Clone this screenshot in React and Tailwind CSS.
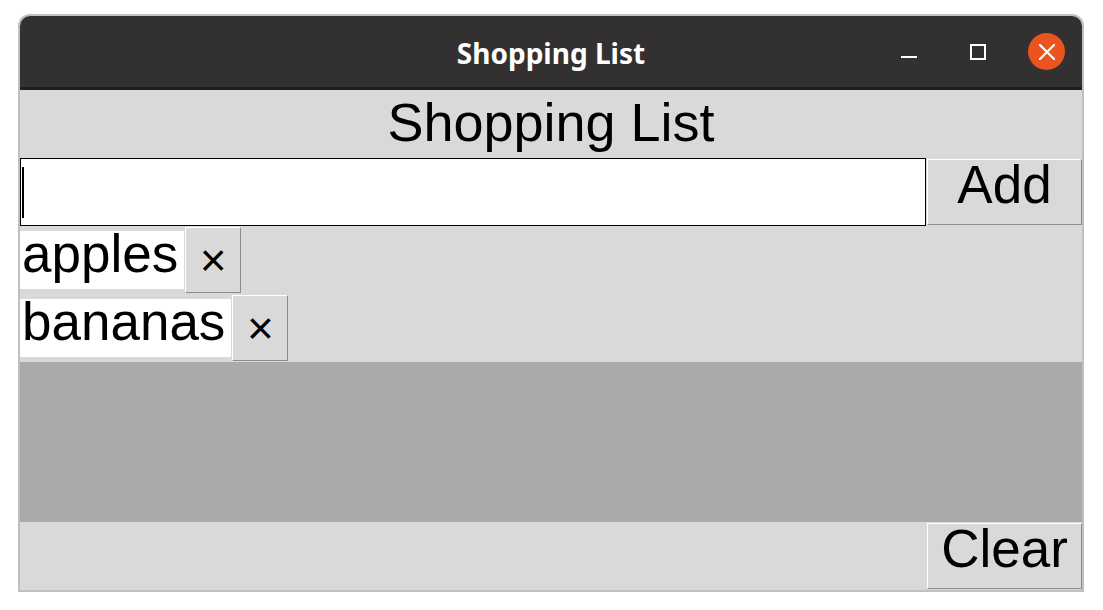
import React from 'react';

const font = { fontFamily: '"Liberation Sans", Arial, sans-serif' };

const TkButton = ({ children, className = '' }) => (
  <div
    className={`flex justify-center items-start bg-[#d9d9d9] border border-t-white border-l-white border-r-[#8c8c8c] border-b-[#8c8c8c] text-black ${className}`}
  >
    {children}
  </div>
);

const items = ['apples', 'bananas'];

export default function App() {
  return (
    <div className="w-[1103px] h-[610px] bg-white pt-[14px] pl-[18px]">
      <div className="w-[1066px] border-2 border-[#c0c0c0] rounded-t-[12px] overflow-hidden">
        {/* Title bar */}
        <div className="h-[74px] bg-[#323031] border-b-[3px] border-[#1f1f1f] grid grid-cols-[1fr_auto_1fr] items-center">
          <div />
          <div
            className="text-white font-bold text-[28px] leading-none pt-[2px]"
            style={{ fontFamily: '"Noto Sans", "Open Sans", sans-serif' }}
          >
            Shopping List
          </div>
          <div className="flex justify-end items-center pr-[17px]">
            <div className="h-[16px] w-[16px] flex items-end pb-[2px]">
              <div className="w-[16px] h-[2px] bg-white" />
            </div>
            <div className="ml-[53px] w-[16px] h-[16px] border-2 border-white" />
            <div className="ml-[42px] w-[37px] h-[37px] rounded-full bg-[#e95420] flex items-center justify-center">
              <svg width="16" height="16" viewBox="0 0 16 16">
                <path d="M1 1 L15 15 M15 1 L1 15" stroke="white" strokeWidth="2.2" strokeLinecap="round" />
              </svg>
            </div>
          </div>
        </div>

        {/* Content */}
        <div className="bg-[#d9d9d9] text-[53px] text-black" style={font}>
          <div className="h-[68px] text-center text-[54px] leading-[64px]">Shopping List</div>

          <div className="h-[68px] flex">
            <div className="flex-1 h-[68px] bg-white border border-black flex items-center">
              <div className="ml-[1px] w-[2px] h-[51px] bg-black" />
            </div>
            <TkButton className="ml-[1px] my-[1px] w-[155px] h-[66px] leading-[49px]">Add</TkButton>
          </div>

          {items.map((it) => (
            <div key={it} className="h-[68px] flex items-center">
              <div className="h-[58px] bg-white pl-[2px] pr-[6px] leading-[45px]">{it}</div>
              <TkButton className="ml-[1px] w-[56px] h-[66px] !items-center">
                <span className="text-[46px] leading-none">×</span>
              </TkButton>
            </div>
          ))}

          <div className="h-[160px] bg-[#aaaaaa]" />

          <div className="h-[68px] flex justify-end items-center">
            <TkButton className="w-[155px] h-[66px] leading-[49px]">Clear</TkButton>
          </div>
        </div>
      </div>
    </div>
  );
}
